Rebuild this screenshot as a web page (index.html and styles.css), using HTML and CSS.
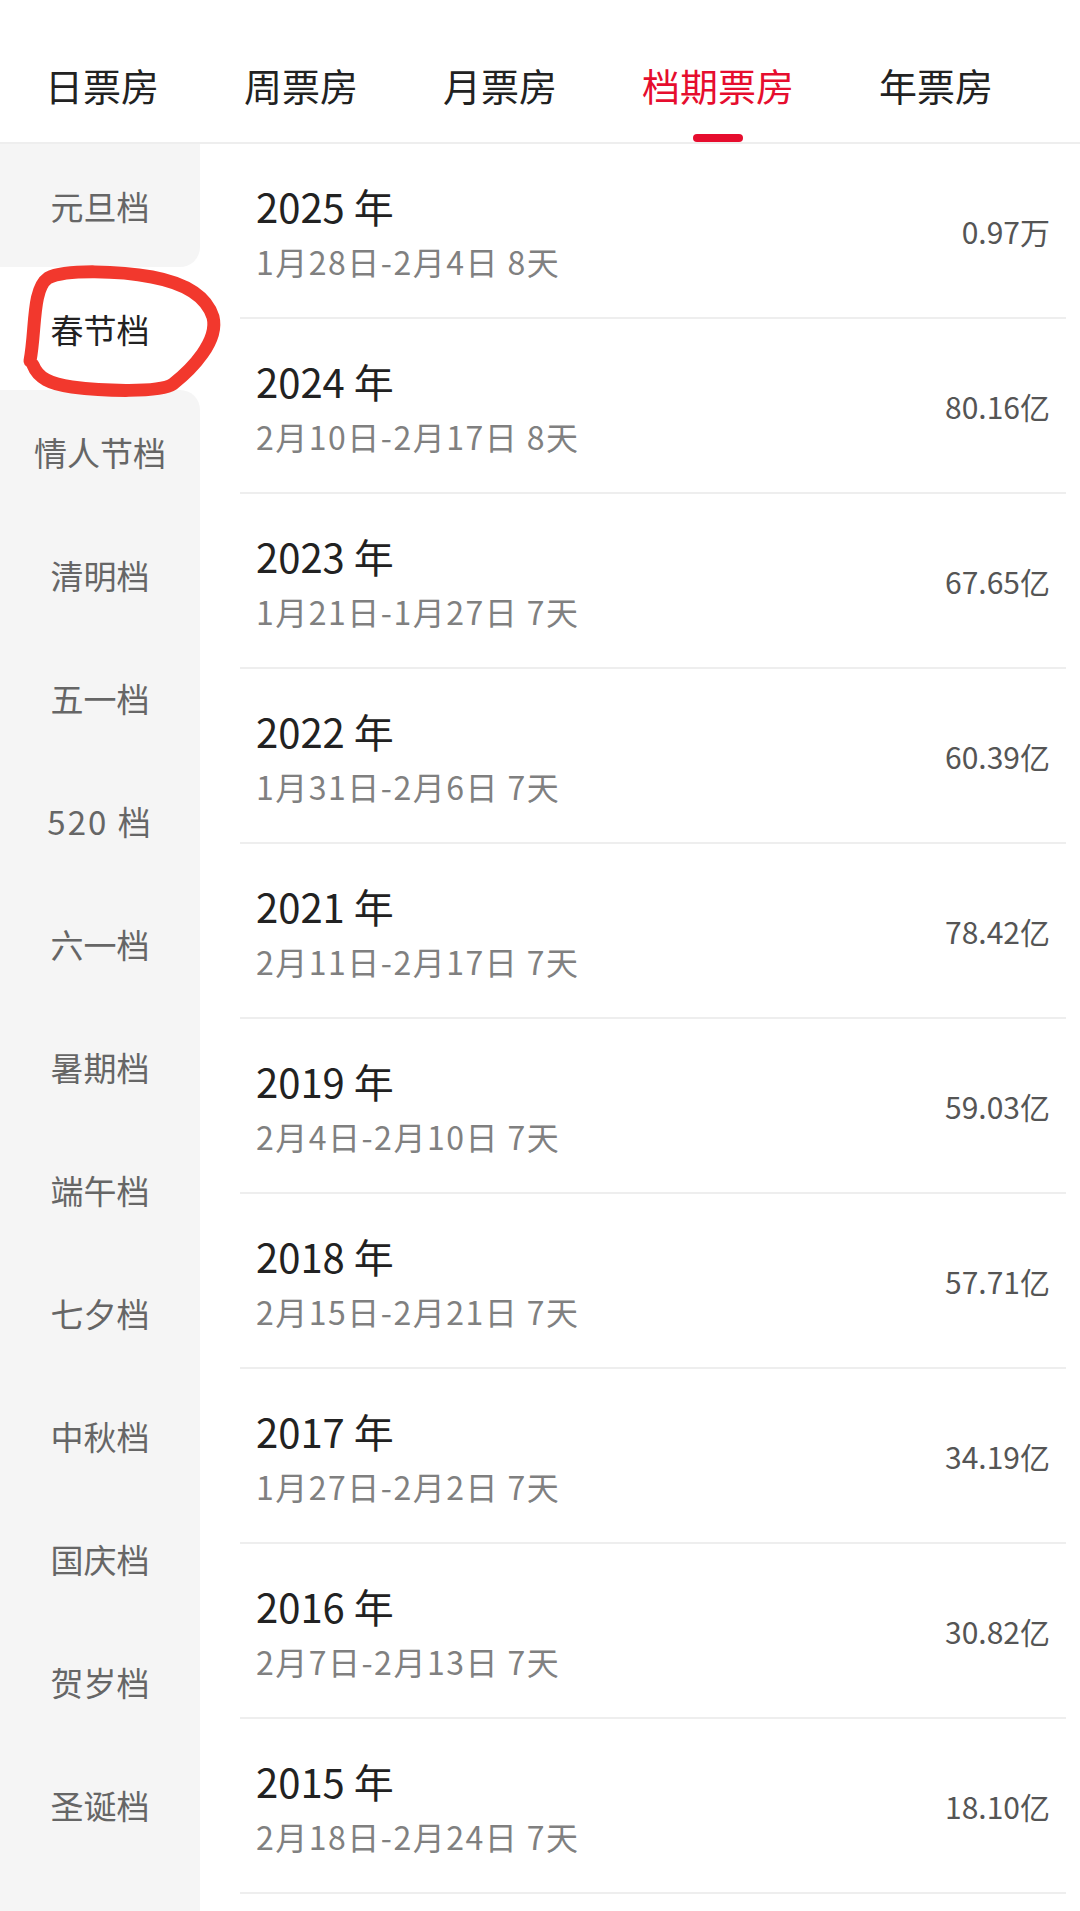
FILE: index.html
```html
<!DOCTYPE html>
<html lang="zh-CN">
<head>
    <meta charset="UTF-8">
    <meta name="viewport" content="width=device-width, initial-scale=1.0">
    <title>档期票房</title>
    <link rel="stylesheet" href="styles.css">
</head>
<body>
    <div class="tabs">
        <div class="tab">日票房</div>
        <div class="tab">周票房</div>
        <div class="tab">月票房</div>
        <div class="tab active">档期票房<span class="bar"></span></div>
        <div class="tab">年票房</div>
    </div>

    <div class="main">
        <div class="side">
            <div class="side-item before">元旦档</div>
            <div class="side-item current">春节档</div>
            <div class="side-item after">情人节档</div>
            <div class="side-item">清明档</div>
            <div class="side-item">五一档</div>
            <div class="side-item wide">520 档</div>
            <div class="side-item">六一档</div>
            <div class="side-item">暑期档</div>
            <div class="side-item">端午档</div>
            <div class="side-item">七夕档</div>
            <div class="side-item">中秋档</div>
            <div class="side-item">国庆档</div>
            <div class="side-item">贺岁档</div>
            <div class="side-item">圣诞档</div>
            <div class="side-item empty"></div>
        </div>

        <div class="list">
            <div class="row">
                <div class="info">
                    <div class="year">2025 年</div>
                    <div class="dates">1月28日-2月4日 8天</div>
                </div>
                <div class="amount">0.97万</div>
            </div>
            <div class="row">
                <div class="info">
                    <div class="year">2024 年</div>
                    <div class="dates">2月10日-2月17日 8天</div>
                </div>
                <div class="amount">80.16亿</div>
            </div>
            <div class="row">
                <div class="info">
                    <div class="year">2023 年</div>
                    <div class="dates">1月21日-1月27日 7天</div>
                </div>
                <div class="amount">67.65亿</div>
            </div>
            <div class="row">
                <div class="info">
                    <div class="year">2022 年</div>
                    <div class="dates">1月31日-2月6日 7天</div>
                </div>
                <div class="amount">60.39亿</div>
            </div>
            <div class="row">
                <div class="info">
                    <div class="year">2021 年</div>
                    <div class="dates">2月11日-2月17日 7天</div>
                </div>
                <div class="amount">78.42亿</div>
            </div>
            <div class="row">
                <div class="info">
                    <div class="year">2019 年</div>
                    <div class="dates">2月4日-2月10日 7天</div>
                </div>
                <div class="amount">59.03亿</div>
            </div>
            <div class="row">
                <div class="info">
                    <div class="year">2018 年</div>
                    <div class="dates">2月15日-2月21日 7天</div>
                </div>
                <div class="amount">57.71亿</div>
            </div>
            <div class="row">
                <div class="info">
                    <div class="year">2017 年</div>
                    <div class="dates">1月27日-2月2日 7天</div>
                </div>
                <div class="amount">34.19亿</div>
            </div>
            <div class="row">
                <div class="info">
                    <div class="year">2016 年</div>
                    <div class="dates">2月7日-2月13日 7天</div>
                </div>
                <div class="amount">30.82亿</div>
            </div>
            <div class="row">
                <div class="info">
                    <div class="year">2015 年</div>
                    <div class="dates">2月18日-2月24日 7天</div>
                </div>
                <div class="amount">18.10亿</div>
            </div>
        </div>
    </div>

    <!-- hand drawn marker around the selected item -->
    <svg class="marker" width="260" height="160" viewBox="0 0 260 160">
        <path d="M30 100 C36 68, 32 28, 48 17 C66 8, 120 10, 152 16 C184 22, 206 34, 213 56 C219 80, 192 108, 173 123 C160 132, 102 130, 72 126 C50 123, 38 117, 33 104"
              fill="none" stroke="#f2382d" stroke-width="13" stroke-linecap="round" stroke-linejoin="round"/>
    </svg>
</body>
</html>
```

FILE: styles.css
```css
body {
    margin: 0;
    background-color: #fff;
    font-family: "Noto Sans CJK SC", "Noto Sans", sans-serif;
    color: #222;
    width: 1080px;
    height: 1911px;
    overflow: hidden;
    position: relative;
}

/* top tabs */
.tabs {
    display: flex;
    gap: 85px;
    height: 142px;
    padding-left: 45px;
    border-bottom: 2px solid #eee;
}

.tab {
    display: flex;
    flex-direction: column;
    align-items: center;
    padding-top: 61px;
    font-size: 38px;
    line-height: 48px;
    color: #222;
}

.tab.active {
    color: #e60d2e;
}

.tab .bar {
    display: block;
    width: 50px;
    height: 8px;
    margin-top: 25px;
    border-radius: 4px;
    background-color: #e60d2e;
}

/* content */
.main {
    display: flex;
}

.side {
    width: 200px;
    flex-shrink: 0;
    background-color: #fff;
}

.side-item {
    height: 123px;
    display: flex;
    align-items: center;
    justify-content: center;
    background-color: #f5f5f5;
    font-size: 33px;
    color: #666;
}

.side-item.wide {
    letter-spacing: 2px;
}

.side-item.before {
    border-bottom-right-radius: 20px;
}

.side-item.after {
    border-top-right-radius: 20px;
}

.side-item.current {
    background-color: #fff;
    color: #222;
}

.list {
    flex: 1;
    padding-left: 40px;
    padding-right: 14px;
}

.row {
    height: 173px;
    display: flex;
    align-items: center;
    justify-content: space-between;
    padding: 0 16px;
    border-bottom: 2px solid #eee;
}

.year {
    font-size: 40px;
    line-height: 50px;
    color: #222;
}

.dates {
    margin-top: 10px;
    font-size: 32px;
    line-height: 40px;
    color: #808080;
    letter-spacing: 1.5px;
}

.amount {
    font-size: 30px;
    color: #555;
}

.marker {
    position: absolute;
    left: 0;
    top: 261px;
}
```
